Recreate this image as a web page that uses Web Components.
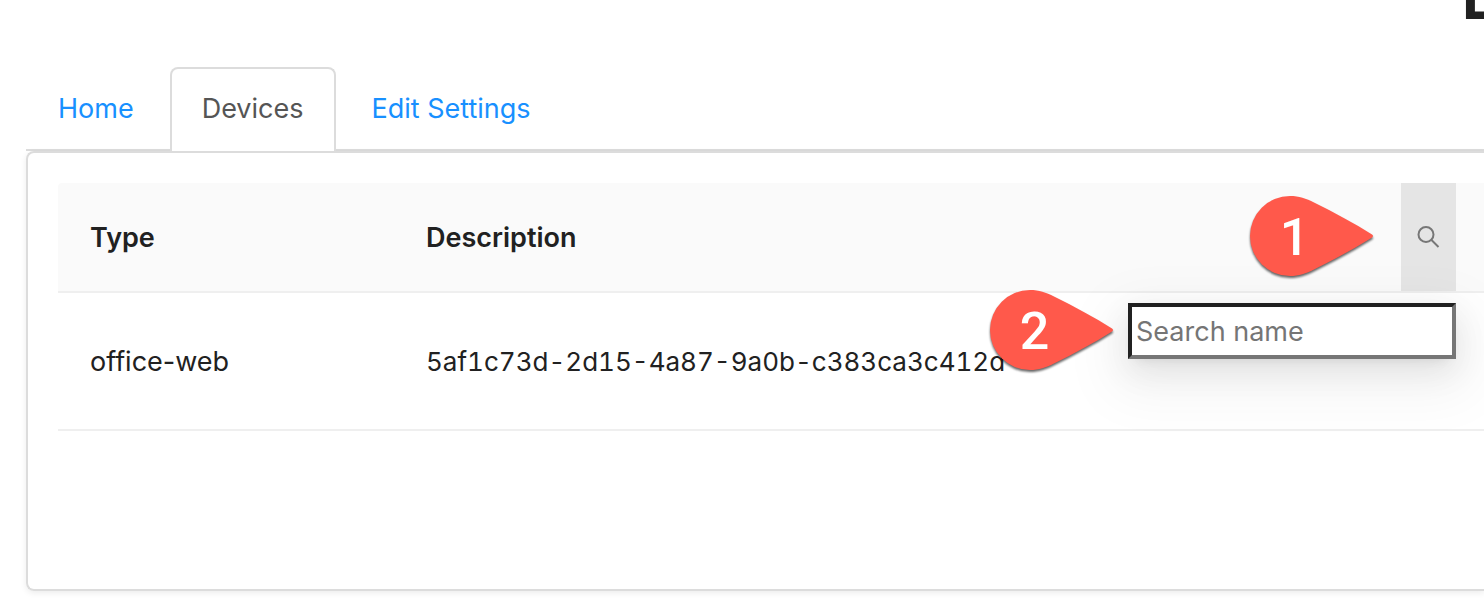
<!DOCTYPE html>
<html lang="en">
<head>
<meta charset="utf-8">
<title>Devices</title>
<style>
html, body { margin: 0; height: 100%; }
body { background: #fff; overflow: hidden; font: 27px/44px Inter, "Open Sans", sans-serif; color: #212121; }
</style>
</head>
<body>
<settings-page></settings-page>
<script>
const define = (name, html) => customElements.define(name, class extends HTMLElement {
  constructor() {
    super();
    this.attachShadow({ mode: 'open' }).innerHTML = html;
  }
});

define('page-heading', `
<style>
:host { display: flow-root; height: 67px; overflow: hidden; }
h1 { margin: -35px 0 0; padding-left: calc(100% - 22px); font-size: 60px; line-height: 64px; font-weight: 700; white-space: nowrap; }
</style>
<h1><slot></slot></h1>`);

define('tab-item', `
<style>
:host { display: block; }
a { display: block; box-sizing: border-box; height: 84px; padding: 18px 30px; border: 2px solid transparent; border-bottom: 0; border-radius: 8px 8px 0 0; color: #1890ff; text-decoration: none; white-space: nowrap; font-variant-ligatures: none; }
:host([active]) a { color: #555; background: #fff; border-color: #dcdcdc; }
</style>
<a href="#"><slot></slot></a>`);

define('tab-bar', `
<style>
:host { display: block; }
nav { display: flex; gap: 4px; height: 82px; border-bottom: 2px solid #dcdcdc; }
</style>
<nav><slot></slot></nav>`);

define('panel-card', `
<style>
:host { display: block; box-sizing: border-box; min-height: 440px; padding: 30px 0 0 30px; border: 2px solid #dcdcdc; border-right: 0; border-radius: 8px 0 0 8px; box-shadow: 0 2px 6px rgba(0,0,0,.08); }
</style>
<slot></slot>`);

define('step-pin', `
<style>
:host { display: block; position: absolute; width: 125px; height: 82px; z-index: 3; }
svg { display: block; overflow: visible; filter: drop-shadow(0 2px 1px rgba(0,0,0,.6)); }
span { position: absolute; left: 0; top: 0; width: 91px; text-align: center; font: 500 52px/86px Roboto, Arial, sans-serif; color: #fff; }
</style>
<svg width="125" height="82" viewBox="0 0 125 82" aria-hidden="true"><path fill="#ff594b" d="M41 1C50 1 57 3.500 65 7.500C85 17.500 105 28 123 39.500Q125 41 123 42.500C105 54 85 64.500 65 74.500C57 78.500 50 81 41 81A40 40 0 0 1 41 1Z"/></svg>
<span><slot></slot></span>`);

define('name-filter', `
<style>
:host { display: block; position: relative; width: 55px; height: 108px; }
button { display: flex; align-items: center; justify-content: center; width: 100%; height: 100%; padding: 0; border: 0; background: #e5e5e5; color: #777; }
.menu { position: absolute; top: 120px; right: 0; width: 328px; z-index: 2; box-shadow: 0 6px 12px -8px rgba(0,0,0,.12), 0 12px 32px rgba(0,0,0,.08), 0 18px 56px 16px rgba(0,0,0,.05); }
input { display: block; box-sizing: border-box; width: 100%; height: 56px; margin: 0; padding: 2px 4px; border: 4px solid; border-color: #212121 #767676 #767676 #212121; border-radius: 0; background: #fff; font: inherit; font-weight: 400; color: #212121; outline: 0; }
input::placeholder { color: #757575; opacity: 1; }
.one { top: 12px; right: 82px; }
.two { top: 106px; right: 342px; }
</style>
<button type="button" aria-label="Filter by name"><svg width="24" height="24" viewBox="0 0 24 24" fill="none" stroke="currentColor" stroke-width="2"><circle cx="9" cy="9.5" r="7.5"/><path d="M14.5 15l7 7"/></svg></button>
<div class="menu"><input type="text" placeholder="Search name" aria-label="Search name"></div>
<step-pin class="one">1</step-pin>
<step-pin class="two">2</step-pin>`);

define('device-table', `
<style>
:host { display: block; }
table { width: 100%; table-layout: fixed; border-collapse: separate; border-spacing: 0; }
.type { width: 336px; }
.end { width: 28px; }
th, td { box-sizing: border-box; padding: 2px 0 0; text-align: left; border-bottom: 2px solid #efefef; }
th { height: 110px; background: #fafafa; font-weight: 600; }
td { height: 138px; }
th:first-child { border-top-left-radius: 4px; }
th:first-child, td { padding-left: 32px; }
th.filter { padding: 0; }
.id { font-size: 26px; font-variant-numeric: tabular-nums; }
.head { display: flex; align-items: center; justify-content: space-between; padding-left: 32px; }
.label { padding-top: 2px; }
</style>
<table>
<colgroup><col class="type"><col><col class="end"></colgroup>
<thead><tr><th scope="col">Type</th><th scope="col" class="filter"><div class="head"><span class="label">Description</span><name-filter></name-filter></div></th><th></th></tr></thead>
<tbody><tr><td>office-web</td><td class="id">5af1c73d-2d15-4a87-9a0b-c383ca3c412d</td><td></td></tr></tbody>
</table>`);

define('settings-page', `
<style>
:host { display: block; }
main { padding-left: 26px; }
</style>
<page-heading>L</page-heading>
<main>
<tab-bar><tab-item>Home</tab-item><tab-item active>Devices</tab-item><tab-item>Edit Settings</tab-item></tab-bar>
<panel-card><device-table></device-table></panel-card>
</main>`);
</script>
</body>
</html>
